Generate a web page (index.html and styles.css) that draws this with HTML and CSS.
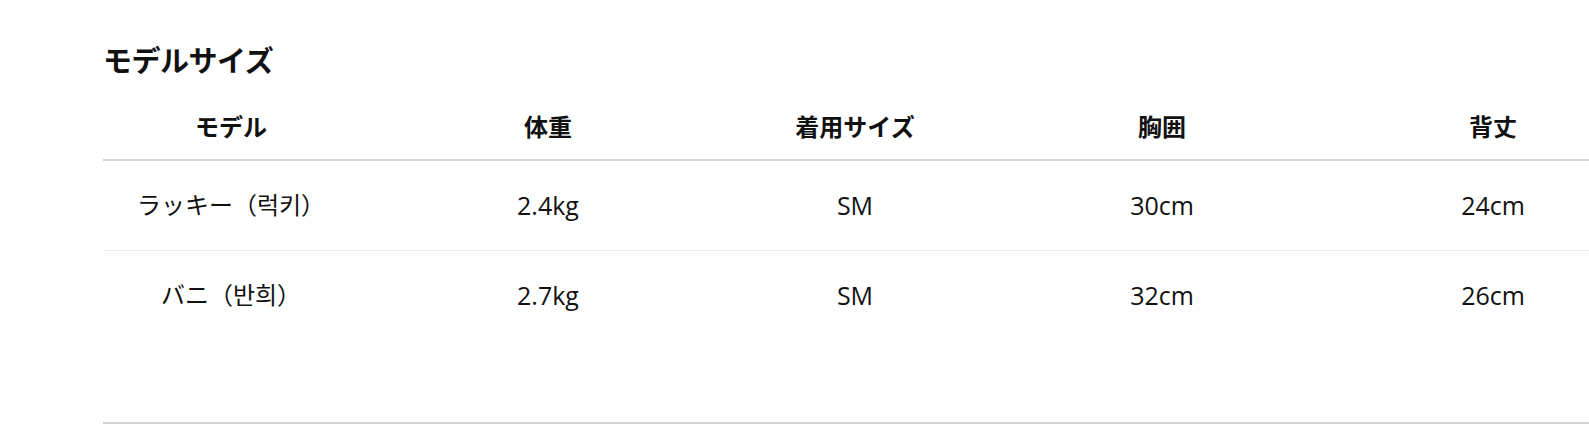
FILE: index.html
```html
<!DOCTYPE html>
<html lang="ja">
<head>
<meta charset="utf-8">
<link rel="stylesheet" href="styles.css">
</head>
<body>
<section class="size-section">
  <h2 class="title">モデルサイズ</h2>
  <table class="size-table">
    <colgroup>
      <col class="c1"><col class="c2"><col class="c3"><col class="c4"><col class="c5">
    </colgroup>
    <thead>
      <tr><th>モデル</th><th>体重</th><th>着用サイズ</th><th>胸囲</th><th>背丈</th></tr>
    </thead>
    <tbody>
      <tr><td>ラッキー（<span class="ko">럭키</span>）</td><td class="num">2.4kg</td><td class="num">SM</td><td class="num">30cm</td><td class="num">24cm</td></tr>
      <tr class="last"><td>バニ（<span class="ko">반희</span>）</td><td class="num">2.7kg</td><td class="num">SM</td><td class="num">32cm</td><td class="num">26cm</td></tr>
    </tbody>
  </table>
</section>
</body>
</html>
```
FILE: styles.css
```css
html, body {
  margin: 0;
  padding: 0;
  background: #fff;
  overflow: hidden;
}
body {
  font-family: "Open Sans", "Noto Sans CJK JP", sans-serif;
  color: #111;
  padding-left: 103px;
}
.size-section {
  padding-top: 39px;
  height: 424px;
  box-sizing: border-box;
  border-bottom: 2px solid #d2d2d2;
}
.title {
  margin: 0 0 19px;
  font-family: "Noto Sans CJK JP", sans-serif;
  font-size: 29px;
  font-weight: 700;
  line-height: 40px;
  letter-spacing: -0.5px;
}
.size-table {
  border-collapse: collapse;
  table-layout: fixed;
  width: 1532px;
}
.c1 { width: 256px; }
.c2 { width: 378px; }
.c3 { width: 236px; }
.c4 { width: 378px; }
.c5 { width: 284px; }
.size-table th {
  font-family: "Noto Sans CJK JP", sans-serif;
  font-size: 24px;
  font-weight: 700;
  height: 61px;
  line-height: 56px;
  padding: 0 0 5px;
  box-sizing: border-box;
  text-align: center;
  border-bottom: 2px solid #d4d4d4;
}
.size-table td {
  font-size: 24px;
  font-weight: 400;
  text-align: center;
  height: 90px;
  padding: 0 0 1px;
  box-sizing: border-box;
  border-bottom: 1px solid #ececec;
  line-height: 30px;
}
.size-table td.num {
  font-size: 25px;
}
.size-table td .ko {
  font-family: "Noto Sans CJK KR", sans-serif;
}
.size-table tr.last td {
  border-bottom: none;
}
```
